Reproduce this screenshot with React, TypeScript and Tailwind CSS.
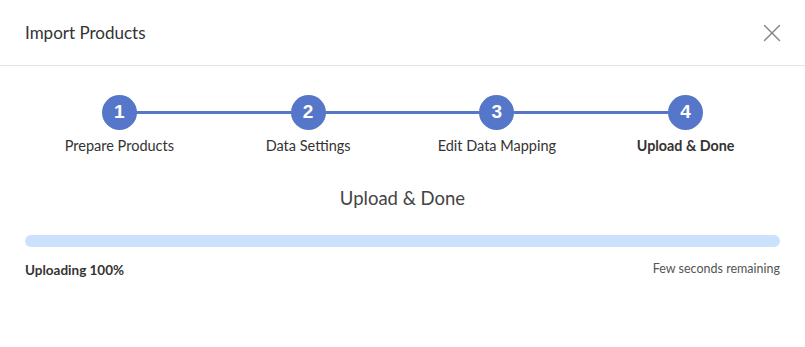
import { X } from 'lucide-react'

const steps = [
  { n: 1, label: 'Prepare Products' },
  { n: 2, label: 'Data Settings' },
  { n: 3, label: 'Edit Data Mapping' },
  { n: 4, label: 'Upload & Done', active: true },
]

export default function App() {
  return (
    <div className="h-[347px] w-[805px] bg-white font-['Lato',sans-serif] text-[#333]">
      <header className="flex h-[66px] items-center justify-between border-b border-[#e3e3e3] pl-[25px] pr-[18px] pt-[1px]">
        <h1 className="text-[17px] text-[#333]">Import Products</h1>
        <button className="text-[#888]">
          <X size={30} strokeWidth={1.2} />
        </button>
      </header>

      <div className="px-[25px]">
        <div className="relative mt-[29px] grid grid-cols-4">
          <div className="absolute left-[12.5%] right-[12.5%] top-[16px] h-[3px] bg-[#5677c9]" />
          {steps.map((step) => (
            <div key={step.n} className="relative flex flex-col items-center">
              <div className="flex h-[35px] w-[35px] items-center justify-center rounded-full bg-[#5677c9] font-['Liberation_Sans',sans-serif] text-[19px] font-bold text-white">
                {step.n}
              </div>
              <span
                className={
                  step.active
                    ? 'mt-[5px] text-[14.3px] font-bold text-[#333]'
                    : 'mt-[5px] text-[14.5px] text-[#333]'
                }
              >
                {step.label}
              </span>
            </div>
          ))}
        </div>

        <h2 className="mt-[28px] text-center text-[18.5px] text-[#444]">Upload &amp; Done</h2>

        <div className="mt-[22px] h-[12px] w-full rounded-full bg-[#cce1fb]" />

        <div className="mt-[13px] flex items-center justify-between">
          <span className="text-[13.5px] font-bold text-[#333]">Uploading 100%</span>
          <span className="text-[12.5px] text-[#555]">Few seconds remaining</span>
        </div>
      </div>
    </div>
  )
}
